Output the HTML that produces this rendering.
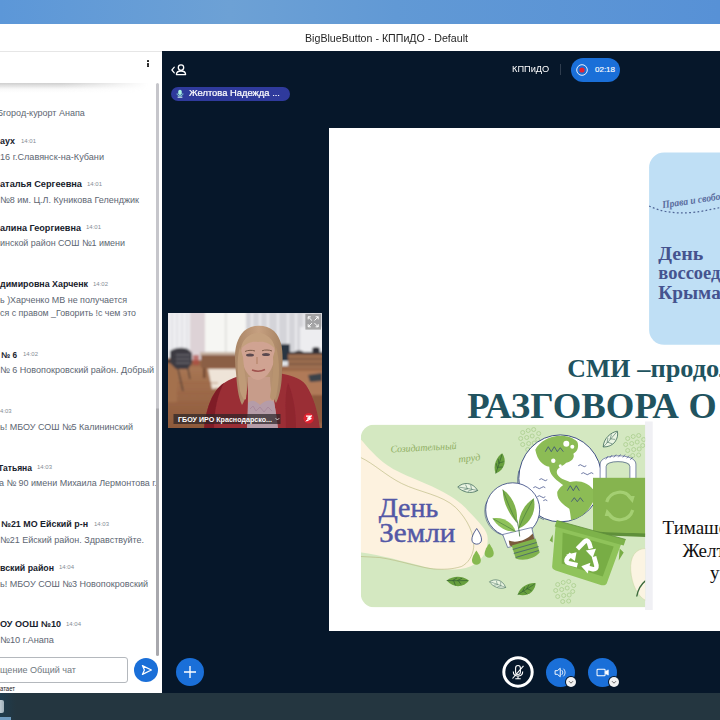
<!DOCTYPE html>
<html><head><meta charset="utf-8">
<style>
html,body{margin:0;padding:0;overflow:hidden;}
html{width:720px;height:720px;}
body{width:720px;height:720px;overflow:hidden;position:relative;background:#06172a;font-family:"Liberation Sans",sans-serif;}
.abs{position:absolute;}
#topbar{left:0;top:0;width:720px;height:24px;background:linear-gradient(90deg,#5c97d8 0%,#6da1d5 32%,#6199d5 55%,#5791d6 100%);}
#titlebar{left:0;top:24px;width:720px;height:27px;background:#fff;}
#title{left:53px;top:24.8px;width:667px;height:27px;line-height:27px;text-align:center;font-size:11.5px;color:#262626;white-space:nowrap;transform:scaleX(.925);transform-origin:50% 50%;}
#chat{left:0;top:0;width:162px;height:693px;overflow:hidden;}
#chatbg{left:0;top:51px;width:162px;height:642px;background:#fff;}
#main{left:162px;top:51px;width:558px;height:642px;background:#06172a;}
#taskbar{left:0;top:693px;width:720px;height:27px;background:#243640;}
.n,.m,.t,.p,.s{position:absolute;white-space:nowrap;transform-origin:0 50%;}
.n{font-weight:bold;font-size:8.6px;color:#17212c;margin-top:.3px;line-height:12px;}
.m{font-size:9px;color:#5d6672;line-height:12px;}
.t{font-size:5.9px;color:#858c94;margin-top:.8px;line-height:8px;}
.p{font-size:9.8px;color:#6f7780;line-height:12px;}
.s{font-size:7px;color:#222;margin-top:.9px;line-height:8px;}
#chatshadow{left:0;top:82.6px;width:156px;height:10px;background:linear-gradient(180deg,rgba(120,120,120,.36),rgba(200,200,200,.10) 60%,rgba(255,255,255,0));-webkit-mask-image:linear-gradient(90deg,#000 40%,transparent 95%);mask-image:linear-gradient(90deg,#000 40%,transparent 95%);}
#dots{left:147.4px;top:60.3px;width:3px;height:9px;}
#dots i{display:block;width:1.8px;height:1.7px;background:#222;margin:0 0 .9px 0;border-radius:.5px;}
#scroll{left:155.8px;top:83px;width:3.6px;height:573px;background:linear-gradient(180deg,#c6c6cb 0,#c6c6cb 325px,#a8a8ad 326px,#a8a8ad 100%);border-radius:2px;}
#chatbg{width:161.6px;}
#inputbox{left:-6px;top:657px;width:132px;height:24px;border:1px solid #b4b8bd;border-radius:3px;background:#fff;}
#send{left:134px;top:658.3px;width:24px;height:24px;border-radius:50%;background:#1a6fd8;}
#plus{left:176px;top:657.5px;width:28px;height:28px;border-radius:50%;background:#1a6fd8;}
#pill{left:171px;top:87px;width:119px;height:13.5px;border-radius:7px;background:#2f3a9c;}
#pilltxt{position:absolute;left:17.5px;top:0;line-height:13.5px;font-size:8.3px;color:#fff;white-space:nowrap;transform-origin:0 50%;transform:scaleX(1.13);letter-spacing:0;-webkit-text-stroke:.2px #fff;}
#room{left:512px;top:63px;line-height:13px;font-size:8.8px;color:#fff;white-space:nowrap;transform:scaleX(1.05);transform-origin:0 50%;}
#sep{left:560px;top:64px;width:1px;height:11px;background:#2f3d4e;}
#rec{left:571px;top:58px;width:49px;height:23.5px;border-radius:12px;background:#1a6fd8;}
#rectxt{position:absolute;left:24px;top:0;line-height:23.5px;font-size:8px;color:#fff;-webkit-text-stroke:.15px #fff;}
#slide{left:329.3px;top:127.5px;width:390.7px;height:503.5px;background:#fff;overflow:hidden;}
#video{left:168px;top:313px;width:154px;height:115px;overflow:hidden;background:#8a7a68;}
#mute{left:502.3px;top:656px;width:32px;height:32px;}
.cbtn{width:29px;height:29px;border-radius:50%;background:#1a6fd8;}
#aud{left:545.8px;top:657.7px;}
#cam{left:587.8px;top:657.7px;}
.badge{width:10px;height:10px;border-radius:50%;background:#f2f2f2;box-shadow:0 0 0 1px #06172a;}
.badge svg{display:block}
#chattop{left:0;top:51px;width:161.6px;height:1px;background:#e6e6e6;}

</style></head><body>
<div id="topbar" class="abs"></div>
<div id="titlebar" class="abs"></div>
<div id="title" class="abs">BigBlueButton - КППиДО - Default</div>
<div id="main" class="abs"></div>
<div id="chatbg" class="abs"></div>
<div id="chattop" class="abs"></div>
<div id="chatshadow" class="abs"></div>
<div id="inputbox" class="abs"></div>
<div id="chat" class="abs">
<span class="m" id="l0" style="left:-1.8px;top:113px;transform:translateY(-50%) scaleX(0.9988);">5город-курорт Анапа</span>
<span class="n" id="l1" style="left:0px;top:141px;transform:translateY(-50%) scaleX(1.0378);">аух</span>
<span class="t" id="l2" style="left:21px;top:140px;transform:translateY(-50%) scaleX(1.0169);">14:01</span>
<span class="m" id="l3" style="left:0px;top:156.5px;transform:translateY(-50%) scaleX(1.0128);">16 г.Славянск-на-Кубани</span>
<span class="n" id="l4" style="left:0px;top:184px;transform:translateY(-50%) scaleX(1.0712);">аталья Сергеевна</span>
<span class="t" id="l5" style="left:87px;top:183px;transform:translateY(-50%) scaleX(1.0169);">14:01</span>
<span class="m" id="l6" style="left:0px;top:200px;transform:translateY(-50%) scaleX(1.0010);">№8 им. Ц.Л. Куникова Геленджик</span>
<span class="n" id="l7" style="left:0px;top:227.5px;transform:translateY(-50%) scaleX(1.0588);">алина Георгиевна</span>
<span class="t" id="l8" style="left:86px;top:226.5px;transform:translateY(-50%) scaleX(1.0169);">14:01</span>
<span class="m" id="l9" style="left:0px;top:243px;transform:translateY(-50%) scaleX(0.9919);">инской район СОШ №1 имени</span>
<span class="n" id="l10" style="left:0px;top:284px;transform:translateY(-50%) scaleX(1.0313);">димировна Харченк</span>
<span class="t" id="l11" style="left:93px;top:283px;transform:translateY(-50%) scaleX(1.0169);">14:02</span>
<span class="m" id="l12" style="left:0px;top:300px;transform:translateY(-50%) scaleX(0.9928);">ь )Харченко МВ не получается</span>
<span class="m" id="l13" style="left:0px;top:313px;transform:translateY(-50%) scaleX(0.9802);">ся с правом _Говорить !с чем это</span>
<span class="n" id="l14" style="left:1px;top:354.5px;transform:translateY(-50%) scaleX(0.9552);">№ 6</span>
<span class="t" id="l15" style="left:23px;top:353.5px;transform:translateY(-50%) scaleX(1.0169);">14:02</span>
<span class="m" id="l16" style="left:0px;top:370px;transform:translateY(-50%) scaleX(1.0050);">№ 6 Новопокровский район. Добрый</span>
<span class="t" id="l17" style="left:0px;top:410px;transform:translateY(-50%) scaleX(1.0027);">4:03</span>
<span class="m" id="l18" style="left:0px;top:426.5px;transform:translateY(-50%) scaleX(0.9984);">ь! МБОУ СОШ №5 Калининский</span>
<span class="n" id="l19" style="left:-2px;top:467.5px;transform:translateY(-50%) scaleX(0.9913);">Татьяна</span>
<span class="t" id="l20" style="left:37px;top:466.5px;transform:translateY(-50%) scaleX(1.0169);">14:03</span>
<span class="m" id="l21" style="left:-1px;top:483px;transform:translateY(-50%) scaleX(0.9963);">а № 90 имени Михаила Лермонтова г.</span>
<span class="n" id="l22" style="left:1px;top:524px;transform:translateY(-50%) scaleX(1.0344);">№21 МО Ейский р-н</span>
<span class="t" id="l23" style="left:94px;top:523px;transform:translateY(-50%) scaleX(1.0169);">14:03</span>
<span class="m" id="l24" style="left:0px;top:540px;transform:translateY(-50%) scaleX(1.0011);">№21 Ейский район. Здравствуйте.</span>
<span class="n" id="l25" style="left:0px;top:567.5px;transform:translateY(-50%) scaleX(1.0216);">вский район</span>
<span class="t" id="l26" style="left:59px;top:566.5px;transform:translateY(-50%) scaleX(1.0169);">14:04</span>
<span class="m" id="l27" style="left:0px;top:583.5px;transform:translateY(-50%) scaleX(1.0039);">ь! МБОУ СОШ №3 Новопокровский</span>
<span class="n" id="l28" style="left:0px;top:624px;transform:translateY(-50%) scaleX(1.0563);">ОУ ООШ №10</span>
<span class="t" id="l29" style="left:66px;top:623px;transform:translateY(-50%) scaleX(1.0169);">14:04</span>
<span class="m" id="l30" style="left:0px;top:639.5px;transform:translateY(-50%) scaleX(1.0243);">№10 г.Анапа</span>
<span class="p" id="l31" style="left:0px;top:669.5px;transform:translateY(-50%) scaleX(0.9240);">щение Общий чат</span>
<span class="s" id="l32" style="left:0px;top:688px;transform:translateY(-50%) scaleX(0.8503);">атает</span>
</div>
<div id="dots" class="abs"><i></i><i></i><i></i></div>
<div id="scroll" class="abs"></div>
<div id="send" class="abs"><svg width="24" height="24" viewBox="0 0 24 24"><path d="M8.4 7.6 L17.4 12 L8.4 16.4 L10.4 12 Z" fill="none" stroke="#fff" stroke-width="1.2" stroke-linejoin="round"/></svg></div>
<div id="plus" class="abs"><svg width="28" height="28" viewBox="0 0 28 28"><path d="M14 8V20M8 14H20" stroke="#fff" stroke-width="1.35" fill="none"/></svg></div>

<!-- header controls -->
<svg class="abs" style="left:168px;top:60px" width="24" height="20" viewBox="0 0 24 20">
 <path d="M6.3 7.2 L3.9 10 L6.3 12.8" fill="none" stroke="#fff" stroke-width="1.2" stroke-linecap="round" stroke-linejoin="round"/>
 <circle cx="13" cy="7.6" r="2.7" fill="none" stroke="#fff" stroke-width="1.3"/>
 <path d="M8.4 14.6 C8.4 11.6 10.4 11 13 11 C15.6 11 17.6 11.6 17.6 14.6 Z" fill="none" stroke="#fff" stroke-width="1.3" stroke-linejoin="round"/>
</svg>
<div id="pill" class="abs"><svg class="abs" style="left:5px;top:2.2px" width="8" height="9.5" viewBox="0 0 10 11"><rect x="2.8" y="0.6" width="4.4" height="6.6" rx="2.2" fill="#a9efe0"/><path d="M1.4 5.2C1.4 9.4 8.6 9.4 8.6 5.2" stroke="#8fe6d6" stroke-width="1.2" fill="none"/><path d="M2 9.8H8" stroke="#d9fbf5" stroke-width="1.3"/></svg><span id="pilltxt">Желтова Надежда ...</span></div>
<div id="room" class="abs">КППиДО</div>
<div id="sep" class="abs"></div>
<div id="rec" class="abs"><svg class="abs" style="left:3px;top:3.5px" width="16" height="16" viewBox="0 0 16 16"><circle cx="8" cy="8" r="5.3" fill="none" stroke="#fff" stroke-width="0.9"/><circle cx="8" cy="8" r="2.6" fill="#e8222e"/></svg><span id="rectxt">02:18</span></div>

<!-- slide -->
<div id="slide" class="abs">
<svg class="abs" style="left:0;top:0" width="391" height="503.5" viewBox="329.3 127.5 391 503.5" font-family="Liberation Serif, serif">
<defs>
 <clipPath id="gc"><path d="M375 424H645.5V607H375A14 14 0 0 1 361 593V438A14 14 0 0 1 375 424Z"/></clipPath>
 <clipPath id="globec"><ellipse cx="559" cy="478.7" rx="41.5" ry="43.5"/></clipPath>
 <g id="leafF"><path d="M0 0C4-7 13-9 19-7C17 0 9 5 0 0Z" fill="#679f3d"/><path d="M0 0C6-2 12-4 18-6.5M5-1.700L8-5.500M9-3.200L12.500-6.800M6-2L9 1.500M10-3.500L13.500-1" stroke="#2f5a33" stroke-width=".55" fill="none"/></g>
 <g id="leafO"><path d="M0 0C4-7 13-9 19-7C17 0 9 5 0 0Z" fill="#eaf4e2" stroke="#3f6a5a" stroke-width=".7"/><path d="M0 0C6-2 12-4 18-6.5M5-1.7L8-5.5M9-3.2L12.5-6.8M6-2L9 1.5M10-3.5L13.5-1" stroke="#3f6a5a" stroke-width=".5" fill="none"/></g>
 <g id="dotc" fill="none" stroke="#aed092" stroke-width=".9">
  <circle cx="0" cy="0" r="2"/><circle cx="5.5" cy="-2" r="2"/><circle cx="11" cy="-3" r="2"/><circle cx="16" cy="1" r="2"/>
  <circle cx="-2" cy="6" r="2"/><circle cx="4" cy="5" r="2"/><circle cx="9.5" cy="3.5" r="2"/><circle cx="15" cy="7" r="2"/>
  <circle cx="0" cy="12" r="2"/><circle cx="6" cy="11" r="2"/><circle cx="11.5" cy="10.5" r="2"/><circle cx="5" cy="17" r="2"/><circle cx="11" cy="16.5" r="2"/>
 </g>
</defs>

<!-- blue card -->
<rect x="649.4" y="152" width="100" height="192.3" rx="15" fill="#bfdff5"/>
<path d="M649.5 205.5C660 211 675 213.5 692 212C704 211 712 208.5 721 207" fill="none" stroke="#4f6596" stroke-width="1.25" stroke-dasharray="1.8 2.3"/>
<text x="663" y="207.8" font-size="10.5" font-style="italic" font-weight="bold" fill="#5a6c9e" transform="rotate(-8.5 663 207.8)" textLength="68" lengthAdjust="spacingAndGlyphs">Права и свобода</text>
<g font-weight="bold" font-size="18.6" fill="#45538f">
 <text x="658.6" y="259" textLength="45" lengthAdjust="spacingAndGlyphs">День</text>
 <text x="658.6" y="278.8" textLength="123" lengthAdjust="spacingAndGlyphs">воссоединения</text>
 <text x="658.6" y="298" textLength="62.5" lengthAdjust="spacingAndGlyphs">Крыма</text>
</g>

<!-- headings -->
<g font-weight="bold" fill="#21535f">
 <text x="567.6" y="376.2" font-size="26.2" textLength="63" lengthAdjust="spacingAndGlyphs">СМИ</text>
 <text x="637.6" y="376.2" font-size="26.2" textLength="115.5" lengthAdjust="spacingAndGlyphs">–продолж</text>
 <text x="467.6" y="417.4" font-size="36.2" textLength="211.5" lengthAdjust="spacingAndGlyphs">РАЗГОВОРА</text>
 <text x="688.8" y="417.4" font-size="36.2">О</text>
</g>
<!-- right text -->
<g font-size="19" fill="#111">
 <text x="662.8" y="533.8">Тимашевск</text>
 <text x="682.8" y="556">Желтова</text>
 <text x="710.3" y="578.2">учитель</text>
</g>

<!-- gray stripe -->
<rect x="645.3" y="421" width="7.7" height="188.5" fill="#f0f0f4"/>

<!-- green card -->
<g clip-path="url(#gc)">
 <rect x="361" y="424" width="285" height="183" fill="#d4e8c1"/>
 <!-- cream blob -->
 <path d="M355 432C366 444 374 455 388 465C402 475 428 482 447.8 494C458 500 464 505 468.6 510.5C474 516 479 521 482.5 525.8C486 530 488 534 488 538.3C488 544 487 548 485.3 552C483 557 480 560 475.5 563.3C470 567 463 569 454.7 569C440 569.5 430 568 420 565C400 560 380 554 355 551Z" fill="#fdf2df"/>
 <path d="M361 457C374 463 386 475 402 483C420 492 442 494 456 507C468 519 475 534 474 546.7C473 556 468 563 461.7 566C452 569 444 569 434 568.5C420 567 400 560 380 557L361 556" fill="none" stroke="#b5b57a" stroke-width=".6"/>
 <!-- right cream partial -->
 <path d="M646 548C636 548 630 556 631 570C632 584 638 596 646 600Z" fill="#fbf4e2" stroke="#cfd9a8" stroke-width=".6"/>
 <path d="M646 580C641 584 638 590 637 596" stroke="#3b6a3c" stroke-width="1.4" fill="none"/>
 <!-- dots clusters -->
 <use href="#dotc" x="523" y="432"/>
 <use href="#dotc" x="628" y="438"/>
 <use href="#dotc" x="558" y="584"/>
 <!-- cursive -->
 <text x="391" y="452" font-size="10" font-style="italic" fill="#8fae62" transform="rotate(-3 391 452)" textLength="66" lengthAdjust="spacingAndGlyphs">Созидательный</text>
 <text x="459" y="462" font-size="10" font-style="italic" fill="#8fae62" transform="rotate(-6 459 462)" textLength="22" lengthAdjust="spacingAndGlyphs">труд</text>
 <!-- title -->
 <g font-size="26.6" fill="#5358a6" stroke="#5358a6" stroke-width=".45">
  <text x="379" y="516.6" textLength="59.5" lengthAdjust="spacingAndGlyphs">День</text>
  <text x="379.6" y="541.6" textLength="76" lengthAdjust="spacingAndGlyphs">Земли</text>
 </g>
 <!-- globe -->
 <g transform="translate(1.6 -0.8)">
 <ellipse cx="559" cy="478.7" rx="41.5" ry="43.5" fill="#fff" stroke="#2f3f7c" stroke-width=".9"/>
 <path d="M520 470A42 42 0 0 0 545 519" fill="none" stroke="#2f3f7c" stroke-width=".6" transform="translate(-2.5 1)"/>
 <g clip-path="url(#globec)" fill="#8cbc55">
  <path d="M534 450C538 442 548 436 560 436C566 436 572 438 576 442C578 447 576 452 572 454C574 458 570 462 565 463C562 466 558 467 556 470C554 474 558 478 563 480C568 482 574 484 578 488C572 492 565 488 560 484C553 479 548 474 548 467C542 466 536 461 534 450Z"/>
  <path d="M556 492C560 484 570 480 580 482C588 484 594 490 595 497C592 501 590 507 586 511C580 516 577 522 574 530C569 526 570 516 568 509C562 505 555 500 556 492Z"/>
 </g>
 <g fill="#fff"><circle cx="565" cy="444" r="3"/><circle cx="571" cy="447" r="2"/><circle cx="552" cy="461" r="2.2"/><circle cx="559" cy="466" r="1.5"/></g>
 <g fill="none" stroke="#2f3f7c" stroke-width=".7">
  <path d="M544 452L547 447L550 452L553 447L556 452L559 448L562 452"/>
  <path d="M566 491L569 486L572 491L575 486L578 491"/>
  <path d="M570 502L573 498L576 502L579 498L582 502"/>
  <path d="M577 466q2-2 4 0q2 2 4 0M580 474q2-2 4 0q2 2 4 0q2-2 4 0"/>
  <path d="M538 480q2-2 4 0q2 2 4 0M532 488q2-2 4 0q2 2 4 0q2-2 4 0M536 497q2-2 4 0q2 2 4 0M542 501q2-2 4 0"/>
 </g>
  </g>
 <!-- bag -->
 <path d="M603.4 479V464C603.4 455.500 633.200 455.500 633.200 464V479" fill="none" stroke="#fff" stroke-width="6"/>
 <path d="M600.400 479V463.500C600.400 452.500 636.200 452.500 636.200 463.500V479M606.400 479V466C606.400 459.500 630.200 459.500 630.200 466V479" fill="none" stroke="#2f3f7c" stroke-width=".6"/>
 <path d="M606 459L608.500 455.500M610 457.500L612.500 454.500M614 457L616.500 454M618.500 456.800L621 453.800M623 457L625.500 454M627 457.800L629.500 455M630.500 459.500L633 456.500" stroke="#2f3f7c" stroke-width=".55"/>
 <rect x="593.3" y="477.3" width="52.4" height="57" fill="#86b44f"/>
 <path d="M593.3 531C610 532 630 532.500 646 533V536.500C630 536 610 535.500 593.3 534.300Z" fill="#5f8f3a"/>
 <g fill="none" stroke="#a4cf72" stroke-width="3.2">
  <path d="M607 501.500A13.500 13.500 0 0 1 631 497.500"/>
  <path d="M633 509.500A13.500 13.500 0 0 1 609 513.500"/>
 </g>
 <path d="M627 495.500L635 495.500L633 502.500Z M613 515.500L605 515.500L607 508.500Z" fill="#a4cf72"/>
 <!-- bulb -->
 <circle cx="513" cy="509.3" r="27" fill="#fff" stroke="#2f3f7c" stroke-width=".8"/>
 <path d="M503 534L532 527L535 540L508 547Z" fill="#fff" stroke="#2f3f7c" stroke-width=".6"/>
 <path d="M489 500A25 25 0 0 0 503 533" fill="none" stroke="#2f3f7c" stroke-width=".5" transform="translate(-2 1)"/>
 <path d="M509 540C516 543 527 540 533 533L535 540C528 547 517 548 510 545Z" fill="#7a5a3c"/>
 <path d="M512 545L536 538L540 552C535 558 524 561 516 558Z" fill="#7fb24c"/>
 <path d="M513 549L537 542M514 553L539 546M516 557L539 550" stroke="#2f3f7c" stroke-width=".6"/>
 <path d="M520 536C519 524 516 514 512 506" stroke="#35683a" stroke-width=".8" fill="none"/>
 <path d="M517 522C508 512 503 500 503 489C512 495 519 508 517 522Z" fill="#7fb24c"/>
 <path d="M519 528C518 516 524 504 534 498C537 510 531 523 519 528Z" fill="#7fb24c"/>
 <path d="M516 531C508 532 498 527 493 518C503 516 513 522 516 531Z" fill="#8fc25a"/>
 <path d="M517 522C512 512 507 500 503 489M519 528C523 518 529 507 534 498M516 531C509 527 500 522 493 518" stroke="#35683a" stroke-width=".5" fill="none"/>
 <!-- bin -->
 <path d="M556 524L622 542L607 583C606 585 603 585 601 584.5L556 570C553 569 552 567 552.5 565Z" fill="#8fc35a"/>
 <path d="M563 532L614 546L603 576L562 563Z" fill="#78ad45"/>
 <path d="M557 520L626 539L624 545L555 526Z" fill="#7db24a"/>
 <path d="M557 520L626 539" stroke="#5f8f3a" stroke-width=".8"/>
 <path d="M553 534L550 540L553 542Z M620 548L624 552L619 560Z" fill="#78ad45"/>
 <g transform="rotate(14 584 554)" fill="none" stroke="#fff" stroke-width="4.6" stroke-linejoin="round">
  <path d="M576.500 550L581.500 541.500Q584 538 586.500 541.500L589.500 546.500"/>
  <path d="M594.500 553.500L599 561.500Q600.500 565.500 596.500 566L591 566"/>
  <path d="M580.500 566L571.500 566Q567.500 565.500 569 561.500L572 556.500"/>
  <g fill="#fff" stroke="none">
   <path d="M585 549.500L594.500 545.500L593.500 555Z"/>
   <path d="M592.500 560.500L592.500 571.500L584.500 566Z"/>
   <path d="M567 558.500L576.500 553.500L577 562.500Z"/>
  </g>
 </g>
 <!-- leaves -->
 <use href="#leafF" transform="translate(496 473) rotate(-52) scale(1.05)"/>
 <use href="#leafO" transform="translate(603.5 446.500) rotate(-28) scale(1.05)"/>
 <use href="#leafO" transform="translate(478 490) rotate(-150) scale(1.0)"/>
 <use href="#leafO" transform="translate(506 587) rotate(-140) scale(.85)"/>
 <use href="#leafF" transform="translate(518 594) rotate(-12) scale(1.05)"/>
 <use href="#leafF" transform="translate(447 580) rotate(20) scale(1.1)"/>
 <!-- drops -->
 <path d="M477 528C473.500 533 472 536.500 472.200 539.500C472.600 545 481.400 545 481.800 539.500C482 536.500 480.500 533 477 528Z" fill="#fff" stroke="#2f3f7c" stroke-width=".8"/>
 <path d="M489.500 543C486 548 484.800 551 485 553.500C485.500 558.500 493.500 558.500 494 553.500C494.200 551 493 548 489.500 543Z" fill="#86b94f"/>
 <path d="M476.700 550C473.300 555 472.100 558 472.300 560.500C472.800 565.500 480.600 565.500 481.100 560.500C481.300 558 480.100 555 476.700 550Z" fill="#86b94f"/>
</g>
</svg>

</div>

<!-- video -->
<div id="video" class="abs">
<svg class="abs" style="left:0;top:0" width="154" height="115" viewBox="0 0 154 115">
<defs>
 <filter id="b1" x="-10%" y="-10%" width="120%" height="120%"><feGaussianBlur stdDeviation="1.1"/></filter>
 <filter id="b2" x="-10%" y="-10%" width="120%" height="120%"><feGaussianBlur stdDeviation="0.7"/></filter>
 <linearGradient id="floor" x1="0" y1="0" x2="0" y2="1"><stop offset="0" stop-color="#a87654"/><stop offset="1" stop-color="#8a5638"/></linearGradient>
 <linearGradient id="hair" x1="0" y1="0" x2="1" y2="0"><stop offset="0" stop-color="#a98565"/><stop offset=".5" stop-color="#c6a080"/><stop offset="1" stop-color="#a58262"/></linearGradient>
 <clipPath id="vc"><rect x="0" y="0" width="154" height="115"/></clipPath>
</defs>
<g clip-path="url(#vc)">
<g filter="url(#b1)">
 <rect x="-5" y="-5" width="164" height="125" fill="#9a6646"/>
 <!-- walls/windows -->
 <rect x="-5" y="-5" width="164" height="50" fill="#e2e1e5"/>
 <rect x="0" y="-5" width="22" height="50" fill="#efeff2"/><path d="M4 0V36M9 0V36M14 0V36M19 0V36" stroke="#cfd0d6" stroke-width=".8"/>
 <rect x="22" y="-5" width="16" height="52" fill="#ddd2d6"/>
 <rect x="37" y="-5" width="41" height="46" fill="#f6f6f3"/>
 <rect x="57" y="-5" width="1.4" height="46" fill="#dcdcd8"/>
 <rect x="78" y="-5" width="80" height="48" fill="#d4d4d9"/>
 <g stroke="#f0f0f3" stroke-width="1.6"><path d="M84 0V40M92 0V40M100 0V40M110 0V40M120 0V40M128 0V40M136 0V40M145 0V40"/></g>
 <rect x="132" y="14" width="24" height="26" fill="#ededf0"/>
 <!-- floor -->
 <rect x="-5" y="53" width="80" height="70" fill="url(#floor)"/>
 <path d="M40 56H70V72L44 76Z" fill="#eee4d8"/>
 <path d="M10 70H50M8 80H48M6 90H46M4 100H44" stroke="#9a5f3f" stroke-width="1.2" opacity=".6"/>
 <!-- left cabinet + chairs -->
 <rect x="-5" y="49" width="14" height="40" fill="#a4714e"/>
 <rect x="-5" y="47" width="14" height="3" fill="#3a3533"/>
 <path d="M2 38C8 34 14 34 20 36L24 40V50L20 56H8L2 50Z" fill="#3c3b42"/>
 <path d="M8 42H22M8 46H22M8 50H22" stroke="#8a8a95" stroke-width=".8"/>
 <path d="M10 56L15 78M20 56L22 66" stroke="#2c2a2c" stroke-width="1"/>
 <rect x="25" y="42" width="6" height="10" fill="#b04a45" opacity=".7"/>
 <!-- desk middle -->
 <rect x="32" y="39" width="38" height="3.5" fill="#c8b4a4"/>
 <rect x="33" y="42" width="36" height="13" fill="#8b5f45"/>
 <rect x="35" y="55" width="2.5" height="10" fill="#6f4732"/>
 <!-- right desks -->
 <rect x="112" y="31" width="10" height="20" fill="#2a3442"/>
 <rect x="113" y="48" width="9" height="5" fill="#dfe2e6"/>
 <rect x="120" y="40" width="36" height="16" fill="#9b6d50"/>
 <path d="M120 41H156M120 46H156M120 51H156" stroke="#6a4a38" stroke-width="1.2"/>
 <rect x="120" y="39" width="36" height="2" fill="#3a3538"/>
 <ellipse cx="148" cy="37" rx="4" ry="3" fill="#2f2f36"/>
 <ellipse cx="131" cy="39" rx="4" ry="1.5" fill="#3a3538"/>
 <path d="M112 58H156V82H126Z" fill="#b07a58"/>
 <path d="M140 62L154 60V68L142 69Z" fill="#3a4248"/>
 <rect x="144" y="82" width="12" height="28" fill="#8e5a3c"/>
</g>
<g filter="url(#b2)">
 <!-- cardigan -->
 <path d="M36 116C38 96 44 78 56 70C62 66 68 64 74 62L110 60C120 62 132 64 138 72C146 84 150 100 152 116Z" fill="#9a2d36"/>
 <path d="M56 70C50 80 46 98 46 116H36C38 96 44 78 56 70Z" fill="#7f1f28"/>
 <path d="M120 70C126 84 128 100 128 116H118C118 100 116 84 120 70Z" fill="#8a222b" opacity=".7"/>
 <!-- blouse / chest -->
 <path d="M80 64C80 84 80 100 79 116H110C108 100 105 84 104 64Z" fill="#c79c8a"/>
 <path d="M80 90C84 86 88 88 92 92C96 88 102 86 106 89C108 98 109 108 110 116H79C79.500 106 80 98 80 90Z" fill="#b59ca8"/>
 <path d="M82 96L85 93L88 98L92 94L96 99L100 94L104 98" stroke="#a98a9c" stroke-width="1" fill="none"/>
 <!-- hair back -->
 <path d="M68 60C66 44 66 28 76 18C84 11 98 11 106 18C116 28 115 44 114 58C114 70 112 82 108 90C104 84 102 74 102 64L80 64C80 76 78 86 74 92C70 84 69 72 68 60Z" fill="url(#hair)"/>
 <!-- face -->
 <path d="M73 40C73 28 80 22 90 22C100 22 107 28 107 40C107 52 100 66 90 67C80 66 73 52 73 40Z" fill="#d0a392"/>
 <path d="M73 36C74 26 82 20 90 20C98 20 106 26 107 36C102 30 96 28 90 29C84 28 78 30 73 36Z" fill="#c4a07e"/>
 <!-- eyes/brows/mouth -->
 <ellipse cx="82" cy="42" rx="4" ry="1.6" fill="#5a4a50"/>
 <ellipse cx="98" cy="41.500" rx="4" ry="1.600" fill="#5a4a50"/>
 <path d="M77 38.500C80 37 84 37 87 38M94 37.800C97 36.600 101 36.800 104 38" stroke="#7a5a48" stroke-width="1" fill="none"/>
 <path d="M89 44V51" stroke="#b58468" stroke-width="1.2"/>
 <path d="M84 57C88 58.500 93 58.500 97 56.500" stroke="#a0524e" stroke-width="1.500" fill="none"/>
 <!-- hair front strands -->
 <path d="M72 34C68 46 70 64 72 78C74 84 76 88 78 86C80 74 76 58 75 44Z" fill="#bf9b78"/>
 <path d="M108 34C112 48 112 66 108 84C106 88 103 88 102 84C104 70 106 56 105 44Z" fill="#b8946f"/>
</g>
</g>
<!-- name tag -->
<rect x="5.500" y="101" width="107" height="10" fill="#2a2426" opacity=".7"/>
<text x="10" y="109" font-family="Liberation Sans, sans-serif" font-weight="bold" font-size="7.800" fill="#fff" textLength="94" lengthAdjust="spacingAndGlyphs">ГБОУ ИРО Краснодарско...</text>
<path d="M107.600 105.200L109.400 107L111.200 105.200" fill="none" stroke="#ddd" stroke-width=".9"/>
<!-- muted icon -->
<circle cx="140.700" cy="105.200" r="5.200" fill="#df2230"/>
<path d="M138 103.200H143.400L139.400 105.400H143.400L138.400 108" fill="none" stroke="#fff" stroke-width="1.200"/>
<path d="M137.800 108.400L143.800 102.200" stroke="#fff" stroke-width=".8"/>
<!-- fullscreen -->
<rect x="137.400" y="1" width="15.600" height="15.600" fill="#8e8e8e" opacity=".72"/>
<g fill="none" stroke="#fff" stroke-width="1" stroke-linecap="round" stroke-linejoin="round">
 <path d="M140.200 6V3.800H142.400M148 3.800H150.200V6M150.200 11.600V13.800H148M142.400 13.800H140.200V11.600"/>
 <path d="M140.400 4L143.600 7.200M150 4L146.800 7.200M150 13.600L146.800 10.400M140.400 13.600L143.600 10.400"/>
</g>
</svg>

</div>

<!-- bottom buttons -->
<div id="mute" class="abs"><svg width="32" height="32" viewBox="0 0 32 32">
 <circle cx="16" cy="16" r="14.2" fill="#06172a" stroke="#fff" stroke-width="3"/>
 <rect x="13.6" y="9.5" width="4.8" height="9" rx="2.4" fill="none" stroke="#fff" stroke-width="1.1"/>
 <path d="M11.3 15.5C11.3 21.5 20.7 21.5 20.7 15.5M16 20.2V22.6M13.3 22.8H18.7" fill="none" stroke="#fff" stroke-width="1.1"/>
 <path d="M10.5 22.5L21.5 9.8" stroke="#fff" stroke-width="1.1"/>
</svg></div>
<div id="aud" class="abs cbtn"><svg width="29" height="29" viewBox="0 0 29 29"><g transform="translate(14.5 14.5) scale(.86) translate(-14.5 -14.5)">
 <path d="M8.2 12.4H10.8L14.2 9.6V19.4L10.8 16.6H8.2Z" fill="none" stroke="#fff" stroke-width="1.1" stroke-linejoin="round"/>
 <path d="M16.3 12.2C17.4 13.4 17.4 15.6 16.3 16.8M18.2 10.4C20.4 12.6 20.4 16.4 18.2 18.6" fill="none" stroke="#fff" stroke-width="1.1" stroke-linecap="round"/>
</g></svg></div>
<div class="abs badge" style="left:566.3px;top:677px"><svg width="10" height="10" viewBox="0 0 10 10"><path d="M3 4.2L5 6.2L7 4.2" fill="none" stroke="#555" stroke-width="0.9"/></svg></div>
<div id="cam" class="abs cbtn"><svg width="29" height="29" viewBox="0 0 29 29"><g transform="translate(14.5 14.5) scale(.84) translate(-14.5 -14.5)">
 <rect x="8" y="10.6" width="9.6" height="7.8" rx="1" fill="none" stroke="#fff" stroke-width="1.2"/>
 <path d="M17.8 13.4L21.4 11.4V17.6L17.8 15.6Z" fill="#fff" stroke="#fff" stroke-width="0.8" stroke-linejoin="round"/>
</g></svg></div>
<div class="abs badge" style="left:608.8px;top:677px"><svg width="10" height="10" viewBox="0 0 10 10"><path d="M3 4.2L5 6.2L7 4.2" fill="none" stroke="#555" stroke-width="0.9"/></svg></div>

<div id="taskbar" class="abs"></div>
<div class="abs" style="left:0;top:693px;width:16px;height:27px;background:linear-gradient(90deg,#1f3c4d,#243640)"></div>
<div class="abs" style="left:-1px;top:700px;width:5px;height:13px;background:linear-gradient(90deg,#c4d0d8,#9fb0ba);border-radius:0 2px 2px 0"></div>
<div class="abs" style="left:0;top:717px;width:11px;height:3px;background:#6f9cc0"></div>

</body></html>
